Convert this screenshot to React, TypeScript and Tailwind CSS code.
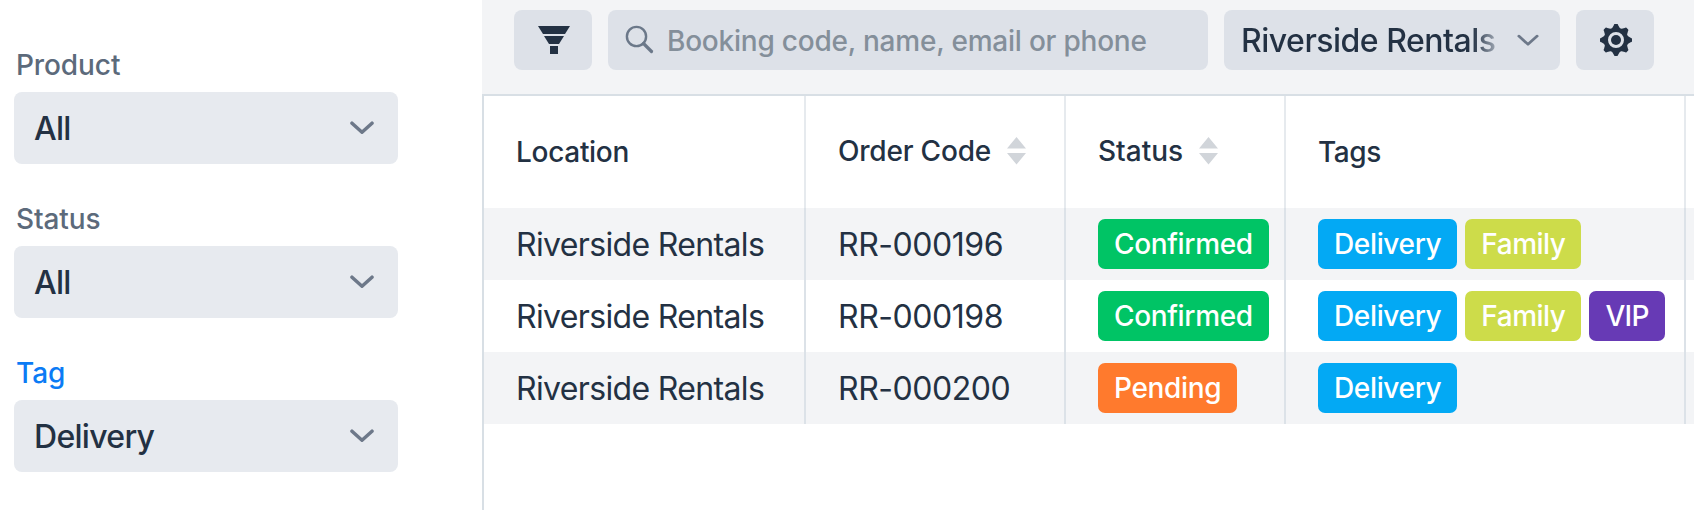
import React from "react";

const tagColors: Record<string, string> = {
  Confirmed: "bg-[#00c465] tracking-[-0.35px]",
  Pending: "bg-[#ff7a2d] tracking-[-0.35px]",
  Delivery: "bg-[#03a9f4] tracking-[-0.35px]",
  Family: "bg-[#cddc4a] tracking-[-0.5px]",
  VIP: "bg-[#673ab5] tracking-[-0.7px]",
};

const bookings = [
  { location: "Riverside Rentals", code: "RR-000196", status: "Confirmed", tags: ["Delivery", "Family"] },
  { location: "Riverside Rentals", code: "RR-000198", status: "Confirmed", tags: ["Delivery", "Family", "VIP"] },
  { location: "Riverside Rentals", code: "RR-000200", status: "Pending", tags: ["Delivery"] },
];

const columns = "grid grid-cols-[322px_260px_220px_400px_1fr]";

const FilterIcon = () => (
  <svg width="32" height="28" viewBox="0 0 32 28" fill="#233143">
    <path d="M0 0h32l-5 8H5zM6 10h20l-5 8H11zM12 20h8v8h-8z" />
  </svg>
);

const SearchIcon = () => (
  <svg width="30" height="30" viewBox="0 0 30 30" fill="none" stroke="#6b7889" strokeLinecap="round">
    <circle cx="11.5" cy="11.5" r="9.6" strokeWidth="2.4" />
    <path d="M18.5 18.5l8 8" strokeWidth="3.2" />
  </svg>
);

const GearIcon = () => (
  <svg width="32" height="32" viewBox="-16 -16 32 32" fill="#233143">
    {[0, 45, 90, 135, 180, 225, 270, 315].map((angle) => (
      <path key={angle} d="M-4.4-11L-2.3-14.6Q-2-16-1.2-16H1.2Q2-16 2.3-14.6L4.4-11z" transform={`rotate(${angle})`} />
    ))}
    <circle r="10.2" fill="none" stroke="#233143" strokeWidth="4.4" />
    <circle r="5" />
  </svg>
);

const Chevron = ({ small = false }) => (
  <svg
    width={small ? 22 : 24}
    height={small ? 13 : 14}
    viewBox="0 0 24 14"
    fill="none"
    stroke="#6d7889"
    strokeWidth={small ? 3 : 3.5}
    strokeLinecap="round"
    strokeLinejoin="round"
  >
    <path d="M2 2.2l10 9 10-9" />
  </svg>
);

const SortIcon = () => (
  <svg width="19" height="28" viewBox="0 0 19 28" fill="#d1d5da">
    <path d="M9.5 0L19 11.5H0zM0 16h19L9.5 27.5z" />
  </svg>
);

const Select = ({ label, value, active = false }: { label: string; value: string; active?: boolean }) => (
  <div className="flex flex-col">
    <span className={`pl-0.5 pt-px h-10 leading-10 text-[28px] font-[450] tracking-[-0.1px] ${active ? "text-[#0b7bf5]" : "text-[#5c6a7b]"}`}>
      {label}
    </span>
    <div className="mt-2 h-[72px] pl-5 pr-6 flex items-center justify-between rounded-lg bg-[#e7eaef]">
      <span className="pt-0.5 text-[32px] font-medium tracking-[-0.7px]">{value}</span>
      <Chevron />
    </div>
  </div>
);

const Tag = ({ name }: { name: string }) => (
  <span className={`h-[50px] px-4 rounded-[7px] flex items-center text-[28px] font-medium text-white ${tagColors[name]}`}>
    {name}
  </span>
);

const Toolbar = () => (
  <div className="h-24 pt-2.5 pl-8 flex items-start gap-4 bg-[#f3f4f6] border-b-2 border-[#d8dfe5]">
    <button className="w-[78px] h-[60px] pl-0.5 flex items-center justify-center rounded-lg bg-[#dde1e8]">
      <FilterIcon />
    </button>
    <div className="w-[600px] h-[60px] pl-[17px] flex items-center rounded-lg bg-[#dde1e8]">
      <SearchIcon />
      <span className="ml-3 pt-0.5 text-[28px] font-[450] tracking-[-0.22px] text-[#848f9a]">Booking code, name, email or phone</span>
    </div>
    <div className="w-[336px] h-[60px] pl-[17px] pr-[21px] flex items-center justify-between rounded-lg bg-[#dde1e8]">
      <span className="w-[256px] pt-0.5 whitespace-nowrap text-[32px] font-medium tracking-[-0.5px] bg-linear-to-r from-[#233143] from-90% to-[#a5adb8] bg-clip-text text-transparent">
        Riverside Rentals
      </span>
      <Chevron small />
    </div>
    <button className="w-[78px] h-[60px] pl-0.5 flex items-center justify-center rounded-lg bg-[#dde1e8]">
      <GearIcon />
    </button>
  </div>
);

const BookingTable = () => (
  <div className="flex-1 border-l-2 border-[#d8dfe5]">
    <div className={`${columns} h-28 text-[28px] font-medium tracking-[-0.3px]`}>
      <div className="pl-8 flex items-center border-r-2 border-[#e6eaee]">Location</div>
      <div className="pl-8 pb-0.5 flex items-center gap-4 border-r-2 border-[#e6eaee] tracking-[-0.2px]">
        Order Code
        <SortIcon />
      </div>
      <div className="pl-8 pb-0.5 flex items-center gap-4 border-r-2 border-[#e6eaee] tracking-[0px]">
        Status
        <SortIcon />
      </div>
      <div className="pl-8 flex items-center border-r-2 border-[#e6eaee] tracking-[-0.4px]">Tags</div>
    </div>
    {bookings.map((booking) => (
      <div key={booking.code} className={`${columns} h-[72px] text-[32px] tracking-[-0.65px] odd:bg-white even:bg-[#f3f4f6]`}>
        <div className="pl-8 pt-0.5 flex items-center border-r-2 border-[#dce2e8]">{booking.location}</div>
        <div className="pl-8 pt-0.5 flex items-center border-r-2 border-[#dce2e8] tracking-[-0.45px]">{booking.code}</div>
        <div className="pl-8 flex items-center border-r-2 border-[#dce2e8]">
          <Tag name={booking.status} />
        </div>
        <div className="pl-8 flex items-center gap-2 border-r-2 border-[#dce2e8]">
          {booking.tags.map((tag) => (
            <Tag key={tag} name={tag} />
          ))}
        </div>
      </div>
    ))}
  </div>
);

const App = () => {
  return (
    <div className="w-[1694px] h-[510px] flex overflow-hidden bg-white text-[#233143] font-['Inter',sans-serif]">
      <aside className="w-[482px] pt-11 pl-3.5 pr-[84px] flex flex-col gap-[34px]">
        <Select label="Product" value="All" />
        <Select label="Status" value="All" />
        <Select label="Tag" value="Delivery" active />
      </aside>
      <main className="flex-1 flex flex-col">
        <Toolbar />
        <BookingTable />
      </main>
    </div>
  );
};

export default App;
